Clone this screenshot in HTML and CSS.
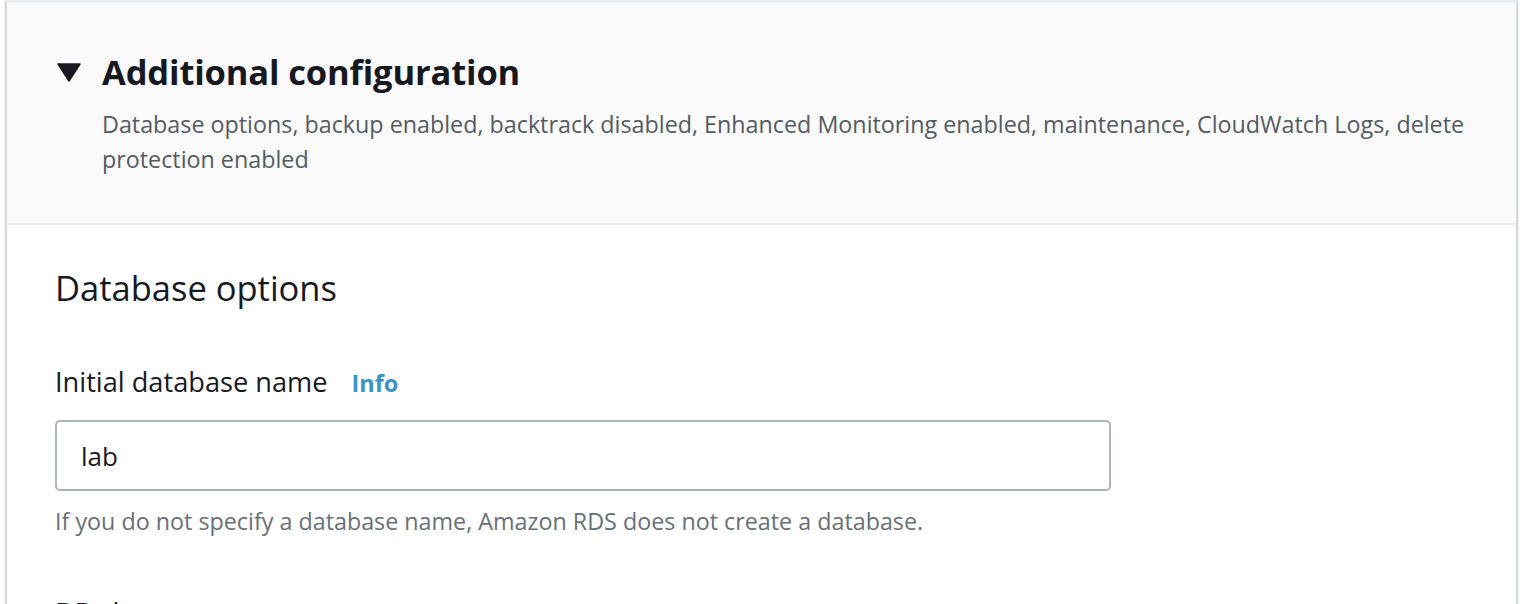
FILE: index.html
```html
<!DOCTYPE html>
<html lang="en">
<head>
<meta charset="utf-8">
<title>Additional configuration</title>
<link rel="stylesheet" href="styles.css">
</head>
<body>
  <div class="card">
    <div class="card-header">
      <span class="caret" aria-hidden="true">
        <svg width="24" height="19" viewBox="0 0 24 19"><path d="M1 1 H23 L12 18 Z" fill="#16191f" stroke="#16191f" stroke-width="1.5" stroke-linejoin="round"/></svg>
      </span>
      <div class="header-text">
        <h2 class="title">Additional configuration</h2>
        <p class="desc">Database options, backup enabled, backtrack disabled, Enhanced Monitoring enabled, maintenance, CloudWatch Logs, delete protection enabled</p>
      </div>
    </div>
    <div class="card-body">
      <h3 class="section-title">Database options</h3>
      <div class="field">
        <div class="label-row">
          <label class="label" for="dbname">Initial database name</label>
          <a class="info" href="#">Info</a>
        </div>
        <input class="text-input" id="dbname" type="text" value="lab">
        <p class="hint">If you do not specify a database name, Amazon RDS does not create a database.</p>
      </div>
      <div class="field">
        <div class="label-row">
          <span class="label">DB cluster parameter group</span>
          <a class="info" href="#">Info</a>
        </div>
      </div>
    </div>
  </div>
</body>
</html>
```

FILE: styles.css
```css
html, body {
  margin: 0;
  padding: 0;
  background: #ffffff;
  font-family: "Open Sans", "Noto Sans", sans-serif;
  color: #16191f;
  overflow: hidden;
}

.card {
  margin-left: 5px;
  width: 1509px;
  border-top: 3px solid #eaeded;
  border-left: 2px solid #d5dbdb;
  border-right: 2px solid #d5dbdb;
  box-shadow: -1px 0 1px rgba(0,0,0,0.06), 1px 0 1px rgba(0,0,0,0.06);
}

.card-header {
  background: #fafafa;
  display: flex;
  align-items: flex-start;
  padding: 47px 40px 46px 50px;
  border-bottom: 2px solid #eaeded;
}

.caret {
  width: 24px;
  height: 44px;
  display: flex;
  align-items: center;
  margin-right: 21px;
}

.header-text {
  flex: 1;
  min-width: 0;
}

.title {
  margin: 0;
  font-size: 34.5px;
  line-height: 44px;
  font-weight: 700;
  letter-spacing: -0.15px;
}

.desc {
  margin: 13px 0 0;
  font-size: 23.3px;
  line-height: 35px;
  color: #545b64;
  max-width: 1400px;
}

.card-body {
  padding: 41px 48px 0 48px;
}

.section-title {
  margin: 0;
  font-size: 34.5px;
  line-height: 44px;
  font-weight: 400;
}

.field {
  margin-top: 54px;
}

.field + .field {
  margin-top: 58px;
}

.label-row {
  display: flex;
  align-items: baseline;
  gap: 24px;
  line-height: 36px;
}

.label {
  font-size: 27.2px;
  color: #16191f;
}

.info {
  font-size: 23.5px;
  font-weight: 700;
  color: #3a93c4;
  text-decoration: none;
}

.text-input {
  display: block;
  box-sizing: border-box;
  width: 1056px;
  height: 71px;
  margin-top: 19px;
  padding: 0 24px;
  border: 2px solid #aab7b8;
  border-radius: 5px;
  font-family: inherit;
  font-size: 26px;
  color: #16191f;
  background: #ffffff;
  outline: none;
}

.hint {
  margin: 14px 0 0;
  font-size: 23.3px;
  line-height: 32px;
  color: #687078;
}
```
